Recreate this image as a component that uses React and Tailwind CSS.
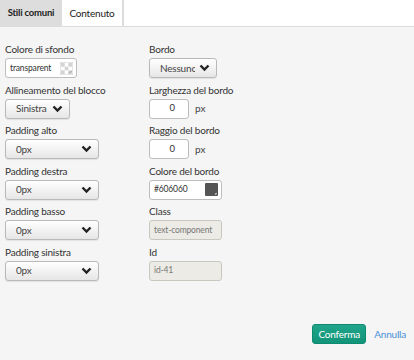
import React from 'react';

const font = { fontFamily: 'Lato, "Open Sans", sans-serif' };

function Chevron() {
  return (
    <svg width="11" height="8" viewBox="0 0 11 8" className="shrink-0">
      <path d="M1.5 1.5 L5.5 5.5 L9.5 1.5" fill="none" stroke="#222" strokeWidth="2.4" />
    </svg>
  );
}

function Select({ value, width }) {
  return (
    <div
      className={`flex h-[20px] items-center justify-between rounded-[3px] border border-[#b9b9b9] bg-gradient-to-b from-white to-[#e6e6e6] pl-[10px] pr-[6px] text-[10px] tracking-[-0.2px] text-[#444] shadow-[0_1px_1px_rgba(0,0,0,0.08)] ${width}`}
    >
      <span className="mr-[4px] overflow-hidden whitespace-nowrap">{value}</span>
      <Chevron />
    </div>
  );
}

function Field({ label, children }) {
  return (
    <div className="flex flex-col">
      <div className="mb-[2px] text-[10px] leading-[14px] tracking-[-0.2px] text-[#333]">{label}</div>
      {children}
    </div>
  );
}

function Checker() {
  return (
    <svg width="13" height="13" viewBox="0 0 13 13">
      <rect width="13" height="13" fill="#fff" stroke="#ccc" />
      <rect x="1" y="1" width="3.7" height="3.7" fill="#d4d4d4" />
      <rect x="8.3" y="1" width="3.7" height="3.7" fill="#d4d4d4" />
      <rect x="4.7" y="4.7" width="3.6" height="3.6" fill="#d4d4d4" />
      <rect x="1" y="8.3" width="3.7" height="3.7" fill="#d4d4d4" />
      <rect x="8.3" y="8.3" width="3.7" height="3.7" fill="#d4d4d4" />
      <path d="M9 11.5 L11.5 9" stroke="#999" strokeWidth="1" />
    </svg>
  );
}

function Swatch() {
  return (
    <svg width="13" height="13" viewBox="0 0 13 13">
      <rect width="13" height="13" rx="1" fill="#555" />
      <path d="M9.5 11.5 L11.5 9.5 L11.5 11.5 Z" fill="#fff" />
    </svg>
  );
}

function TextInput({ value, width, disabled, right }) {
  return (
    <div
      className={`flex h-[20px] items-center justify-between rounded-[3px] border pl-[4px] pr-[3px] text-[8.5px] tracking-[-0.15px] ${
        disabled ? 'border-[#c9c8c0] bg-[#ecebe5] text-[#777]' : 'border-[#bdbdbd] bg-white text-[#333]'
      } ${width}`}
    >
      <span className="whitespace-nowrap">{value}</span>
      {right}
    </div>
  );
}

function NumberInput({ value }) {
  return (
    <div className="flex items-center gap-[6px]">
      <div className="flex h-[20px] w-[40px] items-center justify-end rounded-[3px] border border-[#bdbdbd] bg-white pr-[13px] text-[9.5px] text-[#333]">
        {value}
      </div>
      <span className="text-[10px] text-[#444]">px</span>
    </div>
  );
}

export default function App() {
  return (
    <div className="flex h-[360px] w-[414px] flex-col bg-[#f5f5f5]" style={font}>
      {/* Tabs */}
      <div className="flex h-[27px] border-b border-[#dcdcdc] bg-white">
        <div className="flex w-[62px] items-center justify-center bg-[#dddddd] text-[9.5px] font-bold tracking-[-0.2px] text-[#222]">
          Stili comuni
        </div>
        <div className="flex w-[62px] items-center justify-center border-r-2 border-[#dcdcdc] text-[10px] tracking-[-0.2px] text-[#222]">
          Contenuto
        </div>
      </div>

      {/* Form */}
      <div className="flex flex-1 px-[5px] pt-[15px]">
        <div className="flex w-[144px] flex-col gap-[4.5px]">
          <Field label="Colore di sfondo">
            <TextInput value="transparent" width="w-[72px]" right={<Checker />} />
          </Field>
          <Field label="Allineamento del blocco">
            <Select value="Sinistra" width="w-[65px]" />
          </Field>
          <Field label="Padding alto">
            <Select value="0px" width="w-[94px]" />
          </Field>
          <Field label="Padding destra">
            <Select value="0px" width="w-[94px]" />
          </Field>
          <Field label="Padding basso">
            <Select value="0px" width="w-[94px]" />
          </Field>
          <Field label="Padding sinistra">
            <Select value="0px" width="w-[94px]" />
          </Field>
        </div>
        <div className="flex flex-col gap-[4.5px]">
          <Field label="Bordo">
            <Select value="Nessuno" width="w-[68px]" />
          </Field>
          <Field label="Larghezza del bordo">
            <NumberInput value="0" />
          </Field>
          <Field label="Raggio del bordo">
            <NumberInput value="0" />
          </Field>
          <Field label="Colore del bordo">
            <TextInput value="#606060" width="w-[73px]" right={<Swatch />} />
          </Field>
          <Field label="Class">
            <TextInput value="text-component" width="w-[73px]" disabled />
          </Field>
          <Field label="Id">
            <TextInput value="id-41" width="w-[73px]" disabled />
          </Field>
        </div>
      </div>

      {/* Actions */}
      <div className="flex items-center justify-end gap-[8px] pb-[16px] pr-[8px]">
        <button className="h-[20px] w-[54px] rounded-[3px] border border-[#0e8a70] bg-gradient-to-b from-[#20a58a] to-[#119478] text-[10px] tracking-[-0.2px] text-white">
          Conferma
        </button>
        <button className="text-[10px] tracking-[-0.2px] text-[#4a8fd6]">Annulla</button>
      </div>
    </div>
  );
}
